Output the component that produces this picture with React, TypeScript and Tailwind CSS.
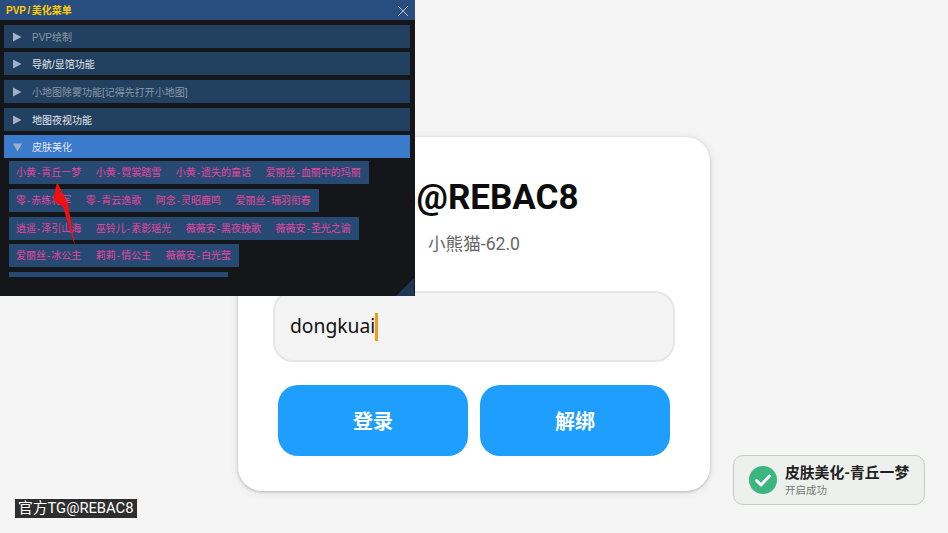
const sans = "font-['Roboto','Noto_Sans_CJK_SC',sans-serif]";

function Row({ label, dim, open, mt }: { label: string; dim?: boolean; open?: boolean; mt: string }) {
  return (
    <div className={`h-[23px] flex items-center ${mt} ${open ? "bg-[#3a7bcb]" : "bg-[#22405f]"}`}>
      <svg width="9" height="10" viewBox="0 0 9 10" className="ml-[9px] shrink-0">
        {open ? <path d="M0 1.5H9L4.5 9.5Z" fill="#9fb0c6" /> : <path d="M0 0.5L8.5 5L0 9.5Z" fill="#a3b1c2" />}
      </svg>
      <span className={`ml-[10px] pt-[2px] text-[10px] leading-none ${dim ? "text-[#8d98a6]" : "text-[#e4e8ed]"}`}>{label}</span>
    </div>
  );
}

function Name({ text }: { text: string }) {
  const [a, b] = text.split("-");
  return (
    <span>
      {a}
      <span className="mx-[1px]">-</span>
      {b}
    </span>
  );
}

function Chips({ items, mt }: { items: string[]; mt: string }) {
  return (
    <div className={`ml-[9px] self-start h-[23px] pl-[7px] pr-[8px] pt-[1px] flex items-center gap-[14.5px] ${mt} bg-[#264a73] text-[10px] leading-none text-[#e8459f] whitespace-nowrap`}>
      {items.map((t) => <Name key={t} text={t} />)}
    </div>
  );
}

export default function App() {
  return (
    <div className={`relative w-[948px] h-[533px] overflow-hidden bg-[#f5f5f5] ${sans}`}>
      <div className="ml-[238px] pt-[137px] w-[472px]">
        <div className="h-[354px] rounded-[24px] bg-white shadow-[0_1px_3px_rgba(0,0,0,0.2),0_1px_10px_rgba(0,0,0,0.1)] flex flex-col items-center">
          <h1 className="mt-[39px] text-[35px] leading-[44px] font-bold text-[#0c0c0c] translate-x-[1px]">TG@REBAC8</h1>
          <p className="mt-[12px] text-[17.6px] leading-[24px] text-[#666]">小熊猫-62.0</p>
          <div className="mt-[35px] w-[402px] h-[71px] rounded-[20px] bg-[#f4f4f4] border-2 border-[#e6e6e6] flex items-center pl-[15px] text-[19.3px] text-[#111] font-['Noto_Sans',sans-serif]">
            dongkuai<span className="w-[3px] h-[28px] bg-[#f39c12]" />
          </div>
          <div className="mt-[23px] flex gap-[12px]">
            <button className="w-[190px] h-[71px] pt-[2px] rounded-[20px] bg-[#1e9fff] text-white text-[20px] font-bold">登录</button>
            <button className="w-[190px] h-[71px] pt-[2px] rounded-[20px] bg-[#1e9fff] text-white text-[20px] font-bold">解绑</button>
          </div>
        </div>
      </div>

      <div className="absolute left-0 top-0 w-[415px] h-[296px] bg-[#141619] font-['Liberation_Sans','Noto_Sans_CJK_SC',sans-serif] flex flex-col">
        <div className="h-[20px] shrink-0 bg-[#2a4d80] flex items-center justify-between pl-[6px] pr-[6px] pt-[1px]">
          <span className="text-[10px] font-bold leading-none text-[#ffcc00]">PVP<span className="mx-[1.5px]">/</span>美化菜单</span>
          <svg width="12" height="12" viewBox="0 0 12 12"><path d="M1 1L11 11M11 1L1 11" stroke="#b4bcc8" strokeWidth="1" /></svg>
        </div>
        <div className="ml-[4px] w-[406px] flex flex-col">
          <Row mt="mt-[5px]" label="PVP绘制" dim />
          <Row mt="mt-[4px]" label="导航/显馆功能" />
          <Row mt="mt-[5px]" label="小地图除雾功能[记得先打开小地图]" dim />
          <Row mt="mt-[5px]" label="地图夜视功能" />
          <Row mt="mt-[4px]" label="皮肤美化" open />
        </div>
        <div className="flex flex-col">
          <Chips mt="mt-[3px]" items={["小黄-青丘一梦", "小黄-霓裳踏雪", "小黄-遗失的童话", "爱丽丝-血丽中的玛丽"]} />
          <Chips mt="mt-[5px]" items={["零-赤练将军", "零-青云逸歌", "阿念-灵昭鹿鸣", "爱丽丝-瑞羽衔春"]} />
          <Chips mt="mt-[5px]" items={["逍遥-泽引山海", "巫铃儿-素影瑶光", "薇薇安-黑夜挽歌", "薇薇安-圣光之谕"]} />
          <Chips mt="mt-[4px]" items={["爱丽丝-冰公主", "莉莉-情公主", "薇薇安-白光莹"]} />
          <div className="mt-[5px] ml-[9px] w-[219px] h-[5px] bg-[#264a73]" />
        </div>
        <svg className="absolute right-[1px] bottom-0" width="18" height="18" viewBox="0 0 18 18"><path d="M18 0V18H0Z" fill="#203655" /></svg>
        <svg className="absolute left-[50px] top-[180px]" width="30" height="70" viewBox="0 0 30 70"><path d="M7 2L18 24L25 66L13 27L3 20Z" fill="#f01010" /></svg>
      </div>

      <div className="absolute left-[15px] top-[499px] h-[19px] w-[122px] bg-[#2e2e2e] text-white text-[14.75px] leading-[19px] pl-[3px] whitespace-nowrap">官方TG@REBAC8</div>

      <div className="absolute left-[733px] top-[455px] w-[192px] h-[50px] rounded-[10px] bg-[#edf0ec] border border-[#c8cbc8] flex items-center pl-[15px]">
        <svg width="28" height="28" viewBox="0 0 28 28" className="shrink-0">
          <circle cx="14" cy="14" r="14" fill="#3cb67f" />
          <path d="M7.5 14.5L12 19L20.5 10" fill="none" stroke="#fff" strokeWidth="3" strokeLinecap="round" strokeLinejoin="round" />
        </svg>
        <div className="ml-[8px] pt-[2px] flex flex-col">
          <span className="text-[14.8px] leading-[18px] font-bold text-[#222]">皮肤美化-青丘一梦</span>
          <span className="mt-[2px] text-[10.5px] leading-[14px] text-[#777]">开启成功</span>
        </div>
      </div>
    </div>
  );
}
